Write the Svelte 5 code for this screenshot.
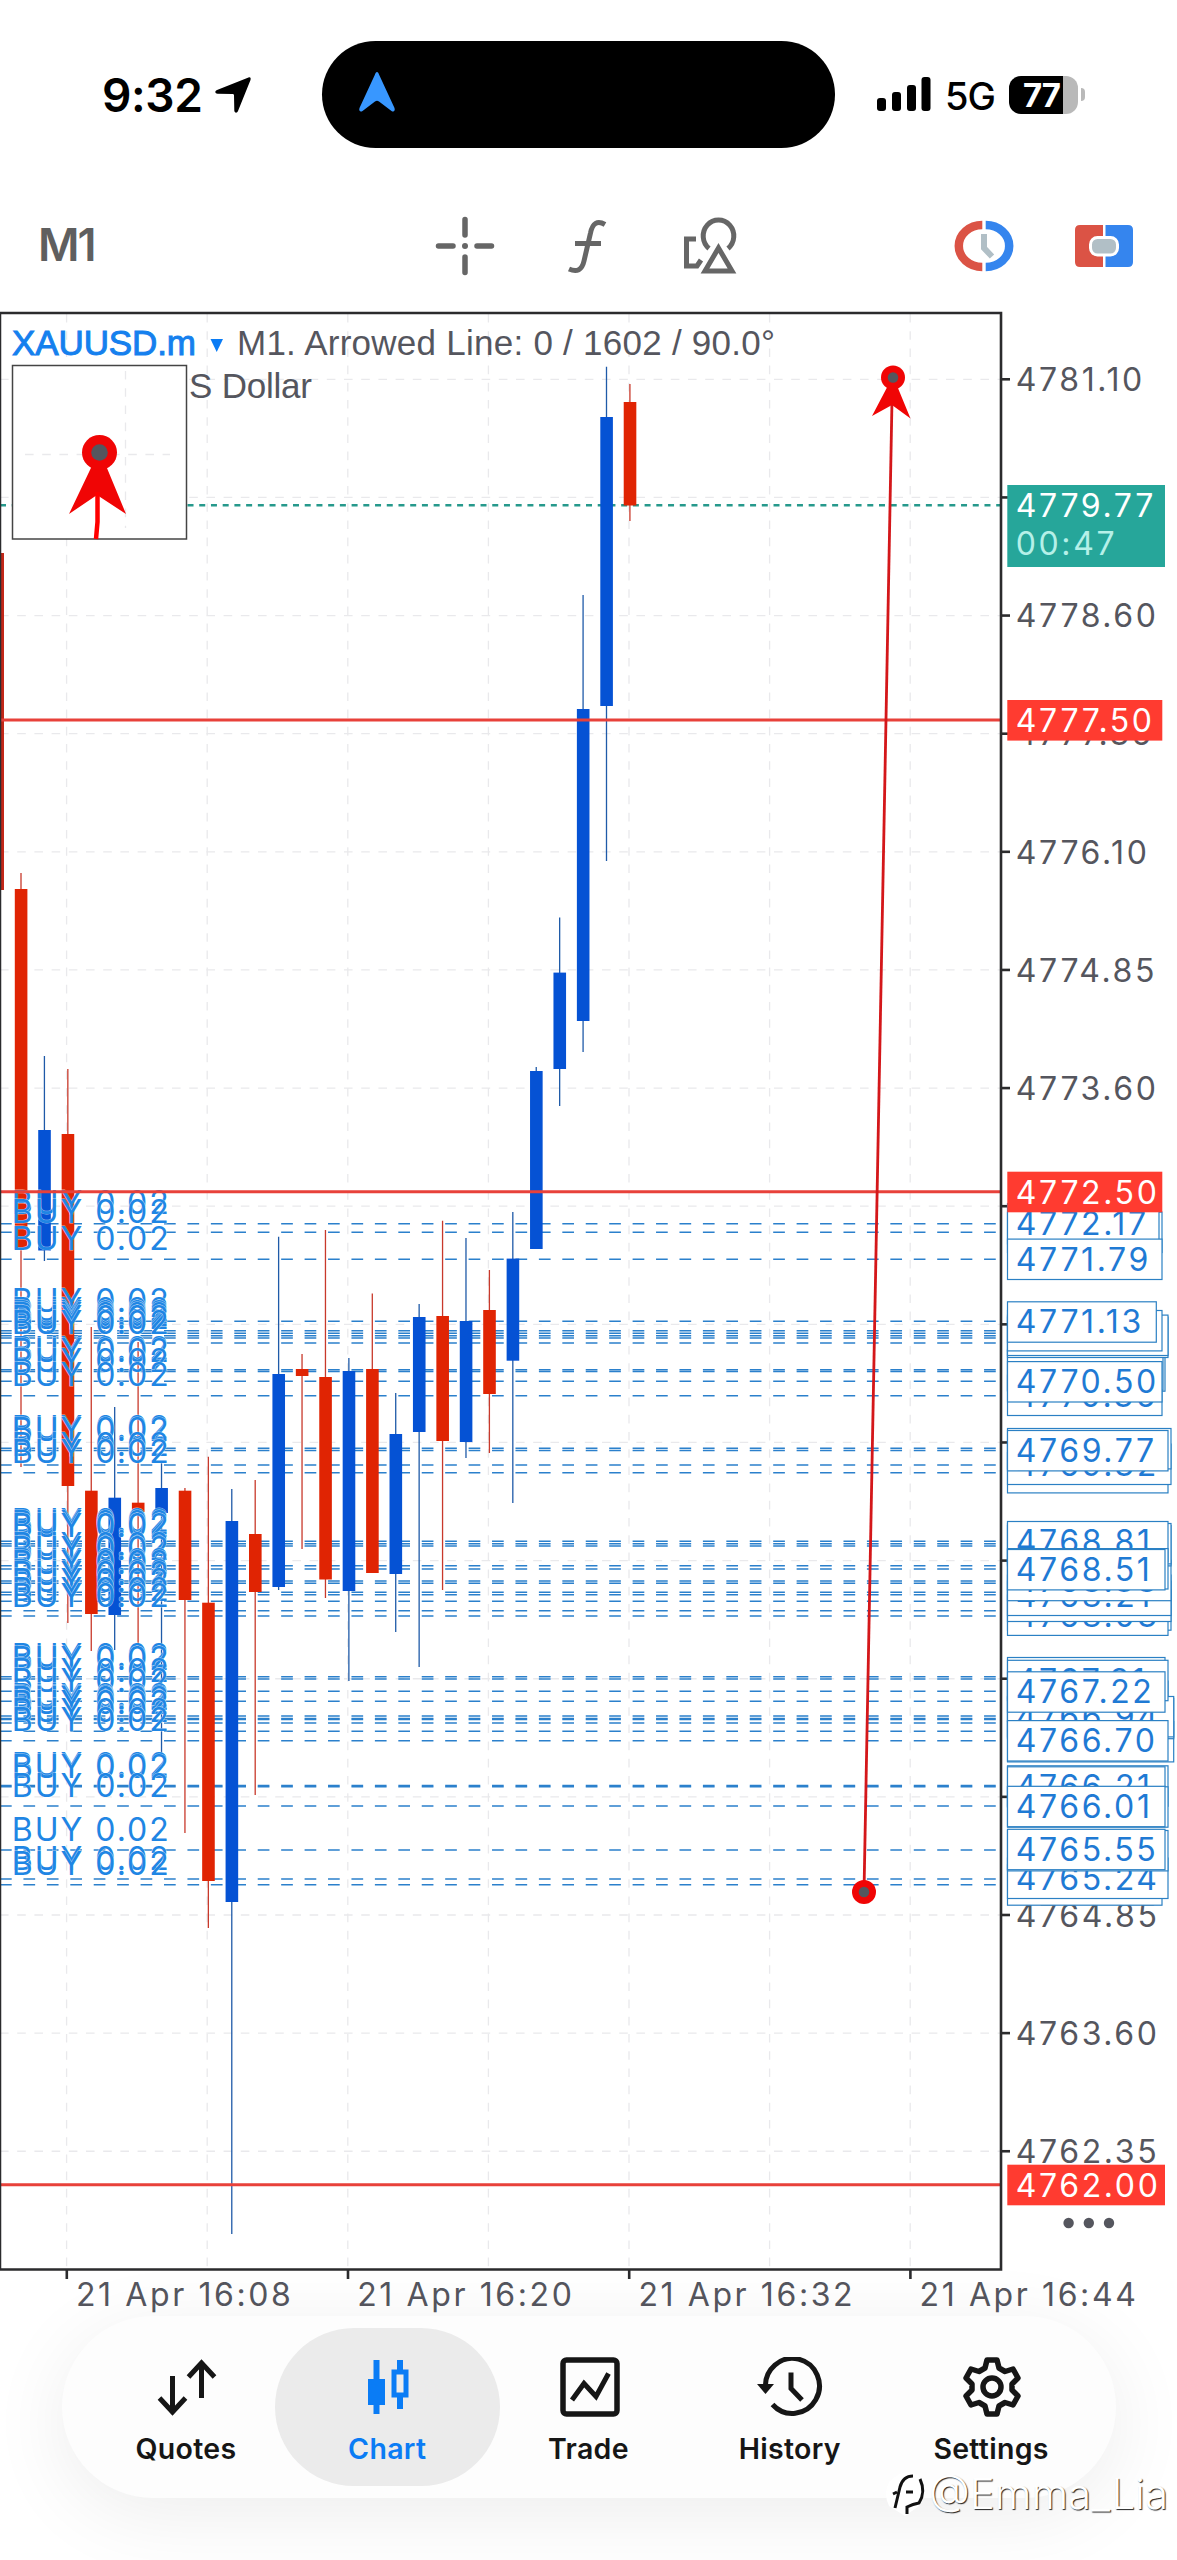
<script lang="ts">
    type Candle = [top: number, bottom: number, high: number, low: number, up: boolean];
    type Tag = [y: number, right: number, text?: string];

    const STEP = 23.42;
    const PLOT_RIGHT = 1000;

    // body top, body bottom, wick top, wick bottom, bullish
    const candles: Candle[] = [
        [889, 1249, 873, 1467, false],
        [1130, 1250.5, 1056, 1261, true],
        [1134, 1486, 1069, 1623, false],
        [1490.7, 1614, 1327, 1651, false],
        [1497.7, 1615, 1407, 1650, true],
        [1502.7, 1512, 1342, 1647, false],
        [1488, 1513, 1463, 1756, true],
        [1490.7, 1600, 1488, 1833, false],
        [1602.7, 1881, 1456.7, 1928, false],
        [1521, 1902, 1489, 2234, true],
        [1534, 1592, 1480, 1795, false],
        [1374, 1587, 1236.7, 1590, true],
        [1369, 1376, 1354, 1549, false],
        [1377, 1579.5, 1230, 1598, false],
        [1371, 1591, 1358, 1681, true],
        [1369, 1573, 1293.5, 1573, false],
        [1434, 1574, 1393, 1632, true],
        [1317, 1432, 1304, 1667, true],
        [1316, 1441, 1220.7, 1590, false],
        [1321, 1442, 1238, 1458, true],
        [1310, 1394, 1270, 1453, false],
        [1258.6, 1360.7, 1212, 1503, true],
        [1071, 1249, 1067, 1249, true],
        [972.6, 1069, 917.5, 1106, true],
        [709, 1021, 595, 1052, true],
        [417, 706, 366.7, 861, true],
        [402, 505.5, 384, 521, false],
    ];

    const orders: number[] = [
        1223.7, 1232.3, 1259.3, 1321.3, 1330.7, 1333.3, 1335.7, 1338, 1343,
        1369.7, 1371.5, 1381.3, 1395.7, 1448.3, 1450.5, 1465, 1472.7, 1541.3,
        1543.7, 1546, 1565.7, 1569, 1581, 1583.3, 1592.3, 1594.7, 1601.3,
        1610.7, 1616, 1676.7, 1679, 1691.3, 1701.3, 1716, 1718.5, 1719.5,
        1723, 1731.3, 1740.7, 1785.5, 1786.8, 1806, 1850, 1879, 1884.7,
    ];

    // listed back to front
    const tags: Tag[] = [
        [1232.3, 1162],
        [1223.7, 1159, '4772.17'],
        [1259.3, 1162, '4771.79'],
        [1395.3, 1162, '4770.35'],
        [1371, 1165],
        [1370, 1163],
        [1381.8, 1162, '4770.50'],
        [1337.3, 1168],
        [1335.3, 1168],
        [1330.7, 1162],
        [1322, 1156.3, '4771.13'],
        [1472.7, 1168],
        [1464.3, 1171, '4769.32'],
        [1448.7, 1171],
        [1450.7, 1168, '4769.77'],
        [1610, 1171],
        [1615.2, 1168, '4768.03'],
        [1601.3, 1171],
        [1595.3, 1171, '4768.21'],
        [1580.5, 1171, '4768.38'],
        [1545.7, 1171],
        [1543.7, 1171],
        [1541.7, 1168, '4768.81'],
        [1568.8, 1168],
        [1569.7, 1165, '4768.51'],
        [1701.3, 1168],
        [1741.7, 1173.7],
        [1718.5, 1173.7],
        [1716.7, 1173.7, '4766.94'],
        [1677.7, 1165],
        [1680.5, 1168, '4767.31'],
        [1692, 1165, '4767.22'],
        [1740.8, 1168, '4766.70'],
        [1786, 1168],
        [1787, 1165, '4766.21'],
        [1807, 1168],
        [1806.5, 1165, '4766.01'],
        [1885, 1162],
        [1878.3, 1168, '4765.24'],
        [1850.7, 1168],
        [1849.5, 1165, '4765.55'],
    ];

    const alerts: Tag[] = [
        [720.3, 1162.3, '4777.50'],
        [1192, 1162.3, '4772.50'],
        [2185, 1165, '4762.00'],
    ];

    const priceTicks = Array.from({ length: 16 }, (_, i) => ({
        y: 379.3 + i * 118.13,
        label: (4781.1 - i * 1.25).toFixed(2),
    }));

    const gridX = Array.from({ length: 7 }, (_, i) => 66.6 + i * 140.6);

    const times = ['21 Apr 16:08', '21 Apr 16:20', '21 Apr 16:32', '21 Apr 16:44'];

    const tabs = ['Quotes', 'Chart', 'Trade', 'History', 'Settings'];
    let active = 'Chart';
</script>

<div class="screen">
    <header class="status">
        <div class="clock">
            <span class="time">9:32</span>
            <svg width="38" height="38" viewBox="0 0 38 38">
                <path d="M34.500 1.500 C36.500 1 37 2 36.500 4 L24 35 C23 37.500 20.500 37 20.300 34.500 L20 19.500 C20 18.500 19.500 18 18.500 18 L3.500 17.700 C1 17.500 .5 15 3 14 Z" />
            </svg>
        </div>
        <div class="island">
            <svg width="38" height="42" viewBox="0 0 38 42">
                <path d="M19 1 C20 1 20.500 2 21 3.500 L36.500 37 C37.500 40 35.500 41.500 33.500 40 L21 30.500 Q19 29 17 30.500 L4.500 40 C2.500 41.500 .5 40 1.500 37 L17 3.500 C17.500 2 18 1 19 1 Z" fill="#3897ff" />
            </svg>
        </div>
        <div class="signal">
            <svg width="54" height="35" viewBox="0 0 54 35">
                <rect x="0" y="21" width="9" height="13" rx="3" />
                <rect x="15" y="15" width="9" height="19" rx="3" />
                <rect x="30" y="8" width="9" height="26" rx="3" />
                <rect x="44.500" y="0" width="9" height="34" rx="3" />
            </svg>
            <span class="network">5G</span>
            <span class="battery"><b>77</b></span>
            <i class="battery_tip"></i>
        </div>
    </header>

    <div class="toolbar">
        <span class="period">M1</span>
        <div class="tools">
            <svg width="60" height="60" viewBox="0 0 60 60" stroke="#666" stroke-width="5.500" stroke-linecap="round">
                <path d="M30 3.500 V19 M30 41 V56.500 M3.500 30 H18 M42 30 H56.500" />
                <circle cx="30" cy="30" r="3" fill="#666" stroke="none" />
            </svg>
            <svg width="44" height="60" viewBox="0 0 44 60" fill="none" stroke="#666" stroke-width="5">
                <path d="M40 8.500 C32.500 4 27.500 7 25.500 17 L19 45 C17 54 12 56.500 4 53 M10 27.500 H36" />
            </svg>
            <svg width="60" height="60" viewBox="0 0 60 60" fill="none" stroke="#666" stroke-width="5">
                <path d="M17 23 H7.500 V50 H18 L22 44" />
                <path d="M30 32.500 A15.300 16 0 1 1 49 32.500" />
                <path d="M39.500 32 L53 55 H26 Z" />
            </svg>
        </div>
        <div class="trade_tools">
            <svg width="60" height="52" viewBox="0 0 60 52" fill="none">
                <path d="M28.300 5 A23.500 21 0 0 0 28.300 47" stroke="#db5345" stroke-width="8.500" />
                <path d="M31.700 5 A23.500 21 0 0 1 31.700 47" stroke="#3585ee" stroke-width="8.500" />
                <path d="M30 14 V28 L38 36.500" stroke="#b1bfc6" stroke-width="6" />
            </svg>
            <svg width="58" height="42" viewBox="0 0 58 42">
                <path d="M5 0 H28 V42 H5 Q0 42 0 37 V5 Q0 0 5 0" fill="#db5345" />
                <path d="M30.500 0 H53 Q58 0 58 5 V37 Q58 42 53 42 H30.500 Z" fill="#3585ee" />
                <rect x="15.500" y="12.500" width="27" height="17.500" rx="7" fill="#b1bfc6" stroke="#fff" stroke-width="3" />
            </svg>
        </div>
    </div>

    <svg class="chart" width="1177" height="2016" viewBox="0 300 1177 2016">
        <g class="grid">
            {#each priceTicks as tick}
                <line x1="0" x2={PLOT_RIGHT} y1={tick.y} y2={tick.y} />
            {/each}
            {#each gridX as x}
                <line x1={x} x2={x} y1="314" y2="2268" />
            {/each}
        </g>

        <line class="bid" x1="0" x2={PLOT_RIGHT} y1="505.300" y2="505.300" />

        <text class="title symbol" x="12" y="355" textLength="184">XAUUSD.m</text>
        <path d="M210.500 339 H223 L216.700 352 Z" fill="#0a7cf5" />
        <text class="title" x="237" y="355" textLength="538">M1. Arrowed Line: 0 / 1602 / 90.0°</text>
        <text class="title" x="189" y="398" textLength="123">S Dollar</text>

        {#each orders as y}
            <line class="order" x1="0" x2={PLOT_RIGHT} y1={y} y2={y} />
        {/each}

        <rect x="0" y="553" width="4" height="337" fill="#c22718" />
        {#each candles as [top, bottom, high, low, up], i}
            <g class:up class:down={!up}>
                <line x1={21 + i * STEP} x2={21 + i * STEP} y1={high} y2={low} />
                <rect x={14.8 + i * STEP} y={top} width="12.600" height={bottom - top} />
            </g>
        {/each}

        {#each orders as y}
            <text class="label order_text" x="11.800" y={y - 9.3}>BUY 0.02</text>
        {/each}

        {#each alerts as [y]}
            <line class="alert" x1="0" x2={PLOT_RIGHT} y1={y - 0.3} y2={y - 0.3} />
        {/each}

        <g class="arrow">
            <line x1="892" y1="400" x2="864" y2="1892" />
            <path d="M893 376 L910.500 418.500 L892 405 L872 416 Z" />
            <circle cx="893" cy="377.500" r="12" />
            <circle class="core" cx="893" cy="377.500" r="5.300" />
            <circle cx="864" cy="1892" r="12" />
            <circle class="core" cx="864" cy="1892" r="5.300" />
        </g>

        <!-- magnifier -->
        <rect x="12.500" y="365.500" width="174" height="173.500" fill="#fff" stroke="#444" stroke-width="1.500" />
        <path class="lens_grid" d="M125.500 371 V528 M25 454.500 H170" />
        <g class="lens_arrow">
            <path d="M99.500 450 L126 514 L97 495 L69 514 Z" />
            <path d="M97.500 492 V522 L96 539" fill="none" stroke="#f00" stroke-width="4.500" />
            <circle cx="99.500" cy="452.500" r="17.500" />
            <circle class="core" cx="99.500" cy="452.500" r="8.300" />
        </g>

        <g class="frame">
            <path d="M0 313 H1001 V2269.500 H0" />
            <path d="M.5 313 V2269" stroke-width="1.500" />
            {#each priceTicks as tick}
                <line x1="1001" x2="1010" y1={tick.y} y2={tick.y} />
            {/each}
            {#each times as _, i}
                <line x1={66.8 + i * 281.2} x2={66.8 + i * 281.2} y1="2269" y2="2279" />
            {/each}
        </g>

        {#each priceTicks as tick}
            <text class="label" x="1015.800" y={tick.y + 11.7}>{tick.label}</text>
        {/each}
        {#each times as time, i}
            <text class="label" x={76 + i * 281.2} y="2305.500">{time}</text>
        {/each}

        {#each tags as [y, right, text]}
            <rect class="tag" x="1007.500" y={y - 20.2} width={right - 1007.5} height="40.400" />
            {#if text}
                <text class="label tag_text" x="1015.800" y={y + 11.3}>{text}</text>
            {/if}
        {/each}

        {#each alerts as [y, right, text]}
            <rect class="alert_tag" x="1007.300" y={y - 20.3} width={right - 1007.3} height="40.600" />
            <text class="label on_fill" x="1015.800" y={y + 11.5}>{text}</text>
        {/each}

        <rect x="1007.300" y="485" width="157.700" height="82" fill="#26a69a" />
        <text class="label on_fill" x="1015.800" y="516.500">4779.77</text>
        <text class="label countdown" x="1015.800" y="554.500">00:47</text>

        <g fill="#55565e">
            <circle cx="1068.600" cy="2223" r="5.200" />
            <circle cx="1088.800" cy="2223" r="5.200" />
            <circle cx="1109" cy="2223" r="5.200" />
        </g>
    </svg>

    <nav>
        {#each tabs as tab}
            <button class:active={tab === active} on:click={() => (active = tab)}>
                <svg width="66" height="60" viewBox="0 0 66 60" fill="none" stroke="currentColor" stroke-width="5">
                    {#if tab === 'Quotes'}
                        <path d="M19.500 19 V54 M6.500 41 L19.500 55 L32.500 41 M48.500 41 V6 M35.500 20 L48.500 6 L61.500 20" />
                    {:else if tab === 'Chart'}
                        <path d="M22.500 3 V57 M46 3 V52" stroke-width="6" />
                        <rect x="14" y="22" width="17" height="26" fill="currentColor" stroke="none" />
                        <rect x="40" y="15" width="12" height="23" fill="#ebebeb" />
                    {:else if tab === 'Trade'}
                        <rect x="8" y="3" width="54" height="54" rx="3.500" stroke-width="5.500" />
                        <path d="M17 43 L29 26.500 L41 39.500 L53.500 16.500" />
                    {:else if tab === 'History'}
                        <path d="M8.500 31 A27 27.500 0 1 1 15.500 47.500" />
                        <path d="M34 15.500 V31.500 L45 43" />
                        <path d="M0 27 H17 L8.500 37 Z" fill="currentColor" stroke="none" />
                    {:else}
                        <path stroke-width="5.500" stroke-linejoin="round" d="M29 3 H39 L41 11 L47 14.500 L55 12 L60 21 L54 27 V33 L60 39 L55 48 L47 45.500 L41 49 L39 57 H29 L27 49 L21 45.500 L13 48 L8 39 L14 33 V27 L8 21 L13 12 L21 14.500 L27 11 Z" />
                        <circle cx="34" cy="30" r="9" stroke-width="5.500" />
                    {/if}
                </svg>
                <span>{tab}</span>
            </button>
        {/each}
    </nav>

    <div class="watermark">
        <svg width="44" height="48" viewBox="0 0 44 48">
            <path d="M4 12 Q22 -6 36 8 Q42 24 34 36 L20 46 L4 36 Q-2 24 4 12" fill="#fff" />
            <path d="M10 38 L15 17 Q18 6 28 6 M8 24 L12 22 M21 22 H28 M35 9 Q41 22 34 33 Q28 34 22 37 V44" fill="none" stroke="#111" stroke-width="3" />
        </svg>
        <span>@Emma_Lia</span>
    </div>
</div>

<style>
    :global(body) {
        background: #fff;
    }

    .screen {
        position: relative;
        display: flex;
        flex-direction: column;
        width: 1177px;
        height: 2560px;
        overflow: hidden;
        background: #fff;
        font-family: Inter, 'Liberation Sans', sans-serif;
    }

    .status {
        display: grid;
        grid-template-columns: 322px 513px 1fr;
        height: 148px;
        padding-top: 41px;
        box-sizing: border-box;
        flex: none;
    }

    .clock {
        display: flex;
        align-items: center;
        gap: 12px;
        padding: 1px 0 0 102px;
    }

    .time {
        font-size: 46px;
        font-weight: 600;
        letter-spacing: -0.4px;
    }

    .island {
        display: flex;
        align-items: center;
        padding: 0 0 5px 36px;
        height: 107px;
        box-sizing: border-box;
        border-radius: 54px;
        background: #000;
    }

    .signal {
        display: flex;
        align-items: center;
        padding-left: 42px;
    }

    .network {
        width: 64px;
        margin-left: 14px;
        font-size: 38px;
        font-weight: 500;
        letter-spacing: -1px;
        box-sizing: border-box;
        padding-top: 3px;
    }

    .battery {
        width: 69px;
        height: 38px;
        border-radius: 12px;
        background: linear-gradient(to right, #000 54px, #b9b9b9 54px);
        color: #fff;
        font-size: 33px;
        line-height: 38px;
        padding-left: 14px;
        box-sizing: border-box;
    }

    .battery b {
        font-weight: 700;
        letter-spacing: -1px;
    }

    .battery_tip {
        width: 4px;
        height: 13px;
        margin-left: 3px;
        border-radius: 0 4px 4px 0;
        background: #b9b9b9;
    }

    .toolbar {
        display: grid;
        grid-template-columns: 435px 1fr 223px;
        align-items: center;
        height: 152px;
        flex: none;
        box-sizing: border-box;
        padding-top: 44px;
    }

    .period {
        padding: 0 0 3px 38px;
        color: #5f5f5f;
        font-size: 45px;
        font-weight: 600;
        letter-spacing: -2px;
    }

    .tools {
        display: flex;
        align-items: center;
        gap: 70px;
    }

    .trade_tools {
        display: flex;
        align-items: center;
        gap: 61px;
    }

    .chart {
        display: block;
        flex: none;
    }

    .grid line,
    .lens_grid {
        fill: none;
        stroke: #e9e9ec;
        stroke-width: 1.3;
        stroke-dasharray: 8.6 8.6;
    }

    .bid {
        stroke: #26998c;
        stroke-width: 2.6;
        stroke-dasharray: 6 5.72;
    }

    .title {
        fill: #55565e;
        font-family: 'Liberation Sans', sans-serif;
        font-size: 35px;
    }

    .symbol {
        fill: #1580ee;
        stroke: #1580ee;
        stroke-width: 1;
    }

    .order {
        stroke: #2b80cc;
        stroke-width: 1.6;
        stroke-dasharray: 11.7 11.73;
    }

    .up line,
    .down line {
        stroke-width: 1.3;
    }

    .up line {
        stroke: #1f5aa8;
    }

    .up rect {
        fill: #0552d4;
    }

    .down line {
        stroke: #c8392b;
    }

    .down rect {
        fill: #e02403;
    }

    .label {
        fill: #55565e;
        font-size: 32px;
        letter-spacing: 2.6px;
    }

    .order_text {
        fill: #1f86e4;
        stroke: rgba(255, 255, 255, 0.6);
        stroke-width: 1;
        paint-order: stroke;
        letter-spacing: 2px;
    }

    .alert {
        stroke: #e8413a;
        stroke-width: 3;
    }

    .arrow line {
        stroke: #d4171a;
        stroke-width: 2.8;
    }

    .arrow path,
    .arrow circle,
    .lens_arrow {
        fill: #f00505;
    }

    .arrow .core,
    .lens_arrow .core {
        fill: #55565e;
    }

    .frame {
        fill: none;
        stroke: #2b2b2d;
        stroke-width: 2.6;
    }

    .tag {
        fill: #fff;
        stroke: #2b80c4;
        stroke-width: 1.2;
    }

    .tag_text {
        fill: #1f7ad4;
    }

    .alert_tag {
        fill: #ff3b30;
    }

    .on_fill {
        fill: #fff;
    }

    .countdown {
        fill: #b5f0e8;
    }

    nav {
        display: grid;
        grid-template-columns: repeat(5, 201.3px);
        justify-content: center;
        align-items: center;
        width: 1054px;
        height: 182px;
        margin-left: 62px;
        flex: none;
        border-radius: 91px;
        background: #fdfdfd;
        box-shadow: 0 16px 80px rgba(0, 0, 0, 0.075);
    }

    button {
        display: flex;
        flex-direction: column;
        align-items: center;
        gap: 15px;
        height: 158px;
        margin: 0 -12px;
        padding: 29px 1px 0 0;
        box-sizing: border-box;
        border: 0;
        border-radius: 79px;
        background: none;
        color: #161616;
        font: 600 28.5px/34px Inter, sans-serif;
    }

    button.active {
        background: #ebebeb;
        color: #0a7cf5;
    }

    button span {
        letter-spacing: 0.3px;
    }

    .watermark {
        position: absolute;
        right: 9px;
        bottom: 41px;
        display: flex;
        align-items: center;
        color: #fff;
        font-size: 42px;
        font-weight: 300;
        text-shadow: 1px 1px 1px #222;
    }
</style>
